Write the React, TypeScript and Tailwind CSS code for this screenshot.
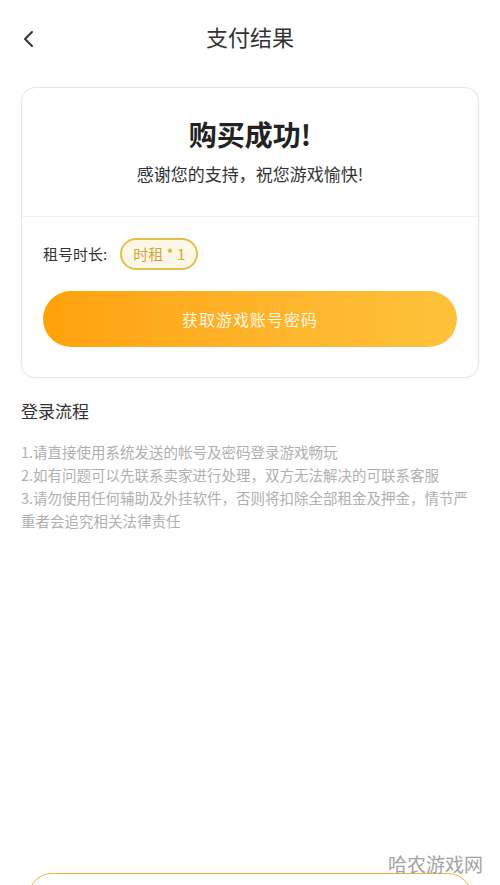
export default function App() {
  return (
    <div
      className="relative flex h-[885px] w-[500px] flex-col overflow-hidden bg-white text-[#333]"
      style={{ fontFamily: '"Noto Sans CJK SC", "Noto Sans", sans-serif' }}
    >
      {/* Header */}
      <div className="relative flex h-[72px] items-center justify-center">
        <button className="absolute left-[18px] top-[26px] p-1">
          <svg width="12" height="18" viewBox="0 0 12 18" fill="none">
            <path d="M10 2 L3 9 L10 16" stroke="#333" strokeWidth="2" strokeLinecap="round" strokeLinejoin="round" />
          </svg>
        </button>
        <h1 className="text-[22px] leading-none text-[#333]">支付结果</h1>
      </div>

      {/* Result Card */}
      <div className="mx-[21px] mt-[15px] rounded-[14px] border border-[#e6e6e6] bg-white shadow-[0_1px_3px_rgba(0,0,0,0.04)]">
        <div className="flex flex-col items-center pt-[28px] pb-[30px]">
          <p className="text-[28px] font-bold leading-[36px] text-[#222]">购买成功!</p>
          <p className="mt-[10px] text-[17px] leading-[24px] text-[#333]">感谢您的支持，祝您游戏愉快!</p>
        </div>
        <div className="border-t border-[#f0f0f0] px-[21px] pt-[21px] pb-[30px]">
          <div className="flex items-center gap-[13px]">
            <span className="text-[15px] text-[#333]">租号时长:</span>
            <span className="flex h-[32px] items-center rounded-full border-2 border-[#e8bd4a] bg-[#fdf7e7] px-[11px] text-[15px] text-[#d6a43a]">
              时租 * 1
            </span>
          </div>
          <button className="mt-[21px] flex h-[56px] w-full items-center justify-center rounded-full bg-gradient-to-r from-[#ffa20a] to-[#fdc23a] text-[16px] tracking-[1px] text-[#fff7e8]">
            获取游戏账号密码
          </button>
        </div>
      </div>

      {/* Login steps */}
      <div className="px-[21px]">
        <h2 className="mt-[21px] text-[17px] leading-[24px] text-[#333]">登录流程</h2>
        <div className="mt-[17px] text-[14.5px] leading-[23px] text-[#b0b0b0]">
          <p>1.请直接使用系统发送的帐号及密码登录游戏畅玩</p>
          <p>2.如有问题可以先联系卖家进行处理，双方无法解决的可联系客服</p>
          <p>3.请勿使用任何辅助及外挂软件，否则将扣除全部租金及押金，情节严重者会追究相关法律责任</p>
        </div>
      </div>

      <div className="flex-1" />

      {/* Bottom button (cut off) */}
      <div className="h-[12px] overflow-hidden px-[28px]">
        <div className="h-[50px] rounded-[24px] border-[1.5px] border-[#e3b440] bg-white" />
      </div>

      {/* Watermark */}
      <span className="absolute right-[17px] bottom-[12px] text-[19px] leading-none text-[#a3a3a3]">哈农游戏网</span>
    </div>
  );
}
